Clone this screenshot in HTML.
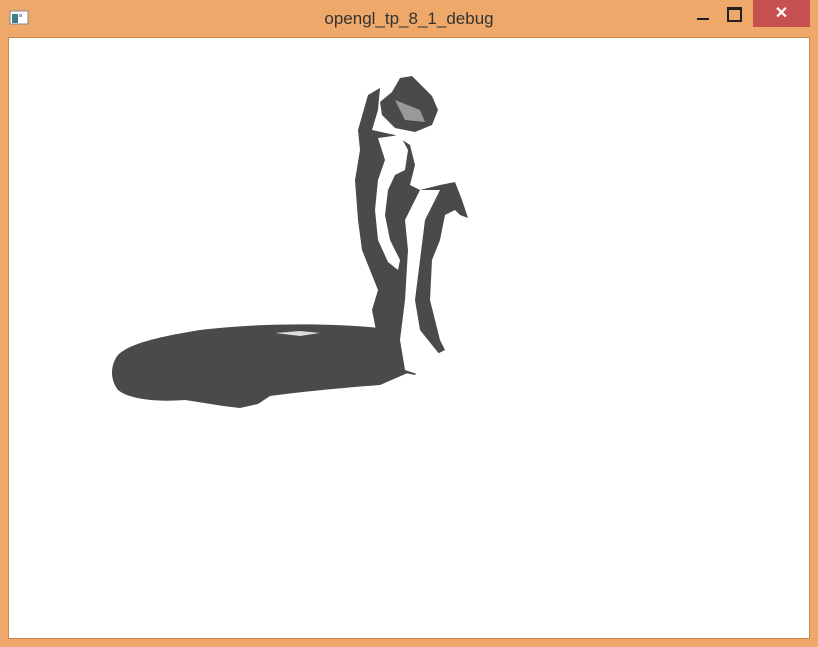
<!DOCTYPE html>
<html><head><style>
html,body{margin:0;padding:0;width:818px;height:647px;overflow:hidden;background:#EEA96A;font-family:"Liberation Sans",sans-serif}
.title{position:absolute;left:0;top:9px;width:818px;text-align:center;font-size:17px;color:#333;}
.client{position:absolute;left:9px;top:38px;width:800px;height:600px;background:#fff;outline:1px solid #c98a52}
.close{position:absolute;left:753px;top:0;width:57px;height:27px;background:#C75050;color:#fff;text-align:center;font-size:16px;line-height:27px;font-weight:bold}
</style></head><body>
<svg style="position:absolute;left:9px;top:10px" width="22" height="16"><rect x="1" y="1" width="18" height="13" fill="#fff" stroke="#888"/><rect x="3" y="4" width="6" height="9" fill="#3a7f8a"/><rect x="10" y="4" width="3" height="3" fill="#aac"/></svg>
<div class="title">opengl_tp_8_1_debug</div>
<div style="position:absolute;left:697px;top:18px;width:12px;height:2px;background:#222"></div>
<div style="position:absolute;left:727px;top:7px;width:11px;height:10px;border:2px solid #222;border-top-width:3px"></div>
<div class="close">✕</div>
<div class="client"></div>
<svg style="position:absolute;left:0;top:0" width="818" height="647">
<g fill="#4a4a4a">
<path d="M118,355 C130,342 170,335 200,330 C250,324 320,322 380,328 L395,345 L410,372 L380,385 C340,388 300,392 270,396 L258,404 L240,408 C220,406 200,402 185,400 C160,402 130,400 118,390 C110,380 110,365 118,355Z"/>
<path d="M400,78 L412,76 L422,86 L432,96 L438,110 L432,125 L415,132 L395,128 L382,115 L380,102 L392,92Z"/>
<path d="M368,95 L380,88 L378,110 L372,130 L395,135 L410,145 L415,165 L410,185 L420,190 L440,185 L455,182 L462,200 L468,218 L460,215 L455,210 L445,215 L440,240 L432,260 L430,300 L440,340 L445,350 L425,360 L415,375 L400,372 L385,365 L378,340 L372,310 L378,290 L370,270 L362,250 L358,220 L355,180 L360,150 L358,130Z"/>
</g>
<g fill="#fff">
<path d="M378,138 L400,135 L408,150 L405,170 L395,175 L388,190 L385,215 L390,240 L400,260 L398,270 L388,262 L378,240 L375,210 L378,180 L385,160Z"/>
<path d="M420,190 L440,190 L425,220 L420,260 L415,300 L420,330 L440,355 L420,375 L405,370 L400,340 L405,300 L408,250 L405,220Z"/>
<path d="M395,100 L420,110 L425,122 L405,120Z" fill="#999"/>
<path d="M275,333 L300,331 L320,333 L300,336Z" fill="#ddd"/>
</g>
</svg>
</body></html>
